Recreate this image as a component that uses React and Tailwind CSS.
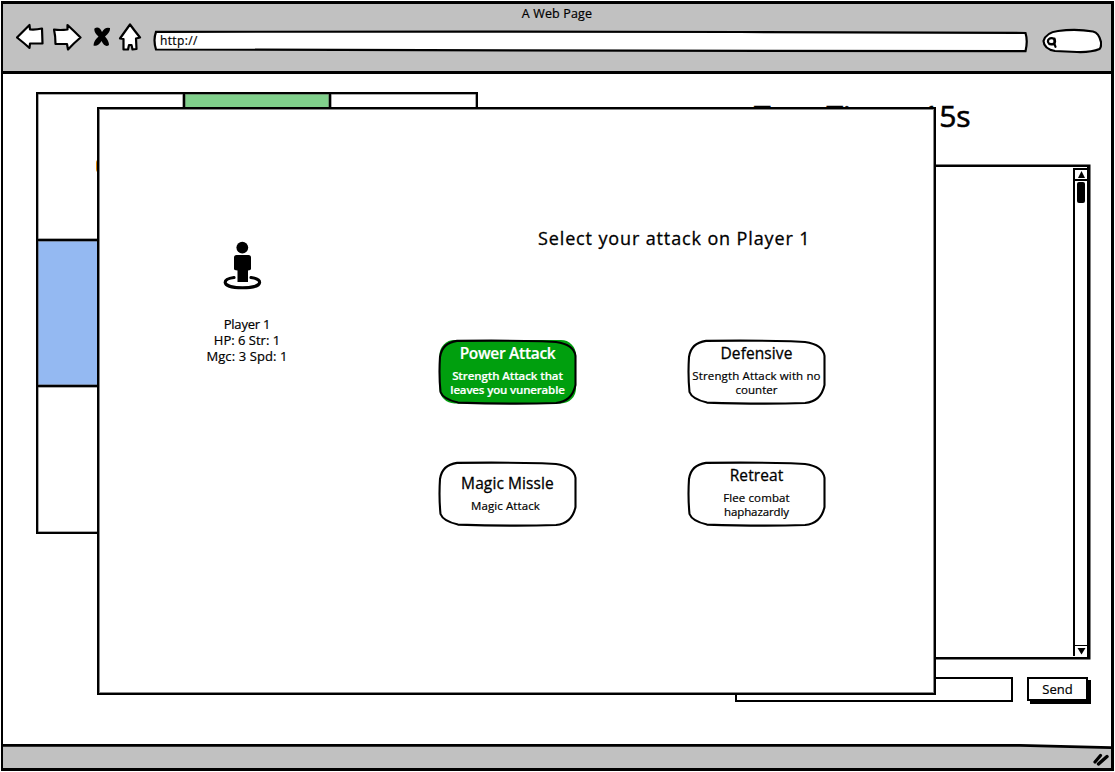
import React from "react";

const ink = { stroke: "#000", strokeWidth: 2.2, strokeLinejoin: "round", strokeLinecap: "round" };

function BackIcon() {
  return (
    <svg className="block h-7 w-7" viewBox="16 23 28 28" fill="#fff" {...ink}>
      <path d="M17 37.5 L29.5 25 L30 29.5 Q36 30 42 28.5 L42.5 43.5 L30 43.5 L29.5 48 Q24 43 17 37.5Z" />
    </svg>
  );
}

function ForwardIcon() {
  return (
    <svg className="block h-7 w-[29px]" viewBox="53 23 29 28" fill="#fff" {...ink}>
      <path d="M54 29.5 Q60 30.5 67.5 29.5 L67.5 25 Q74 31 80.5 37.5 Q74 43 68 49.5 L67 44 L55.5 44 Q55.5 36 54 29.5Z" />
    </svg>
  );
}

function StopIcon() {
  return (
    <svg className="block h-5 w-[18px]" viewBox="93 26 18 20" fill="#000">
      <path d="M94.5 27.5 Q99 24.5 102 31 Q105 25.5 110 27 Q110.5 31 105 35.5 Q109 40 109 44 Q105 47 101.5 40 Q98 46 93.5 44.5 Q93.5 40 98.5 35.5 Q93.5 31 94.5 27.5Z" />
    </svg>
  );
}

function HomeIcon() {
  return (
    <svg className="block h-7 w-6" viewBox="118 23 24 28" fill="#fff" {...ink}>
      <path d="M130 24.5 Q134 30 140 37.5 L136 38.5 L136.5 49 L132.5 49.5 L131.5 45 L129 45 L128 49.5 L123.5 49.5 L123.5 39 L120 38.5 Q126 30 130 24.5Z" />
    </svg>
  );
}

function AddressBar() {
  return (
    <div className="relative flex h-5 w-[874px] items-center pl-[7px] text-[12px] leading-none tracking-[0.35px]">
      <svg className="absolute inset-0 h-full w-full overflow-visible" viewBox="153 31 874 20" fill="#fff" stroke="#000" strokeWidth="2.2">
        <path d="M156 31.8 L480 31.6 L740 32 L1025.5 33 Q1028 41 1025.5 51.2 L640 50.6 L156 49.5 Q153 40 156 31.8Z" />
      </svg>
      <span className="relative">http://</span>
    </div>
  );
}

function SearchBox() {
  return (
    <svg className="block h-[26px] w-[60px]" viewBox="1042 28 60 26" fill="#fff" {...ink}>
      <path d="M1058 31 Q1076 28.5 1093 31.5 Q1099 33 1101 42 Q1101.5 47 1099.5 49 Q1091 52.5 1077 52 L1055 51 Q1044 49 1043.5 41 Q1046 32.5 1058 31Z" />
      <ellipse cx="1051.5" cy="41.2" rx="3.6" ry="3" />
      <path d="M1054.5 38.5 L1054.5 44 L1055.5 46.8 M1054 44.5 L1049.5 44.2" fill="none" />
    </svg>
  );
}

function PlayerIcon() {
  return (
    <svg className="block h-[50px] w-10" viewBox="223 240 40 50">
      <circle cx="242.3" cy="247.6" r="5.9" />
      <path d="M236.5 255 H248.5 Q251 255 251 257.5 V269 Q251 270 248 270.5 V282 H237.5 V270.5 Q234 270 234 269 V257.5 Q234 255 236.5 255Z" />
      <path d="M234 277.5 C227 278.5 225 280.5 225.2 282.5 C226 289.5 259 289.5 259.6 282.5 C259.8 280.5 257.5 278.5 251 277.5" fill="none" stroke="#000" strokeWidth="3.1" strokeLinecap="round" />
    </svg>
  );
}

function AttackCard({ title, lines, selected, titleTrack, lineTracks, single }) {
  return (
    <div className={`relative h-[65px] w-[139px] text-center ${selected ? "text-white" : "text-black"}`}>
      <svg className="absolute inset-0 h-full w-full overflow-visible" viewBox="0 0 139 65">
        {selected && <rect x="1.5" y="1" width="136.5" height="63.5" rx="15" fill="#009f0e" />}
        <path
          d="M19 1.9 Q60 1.2 104 2.2 L118 3 Q136 5.5 137.5 17 L137.5 46 Q134 62.5 118 64 Q75 65.5 20 63.6 Q5 60 2.5 53 Q0.8 36 2 18 Q4 4 19 1.9Z"
          fill={selected ? "none" : "#fff"}
          stroke="#000"
          strokeWidth="2.1"
        />
      </svg>
      <div className={`relative flex flex-col items-center whitespace-nowrap ${single ? "pt-3" : "pt-1"}`}>
        <div className={`text-[15.5px] leading-5 ${selected ? "font-semibold" : "[-webkit-text-stroke:0.3px_#000]"} ${titleTrack}`}>{title}</div>
        <div className={`mt-[6px] text-[11.5px] leading-[14px] ${selected ? "font-semibold" : "[-webkit-text-stroke:0.2px_#000]"} ${single ? "mr-1" : ""}`}>
          {lines.map((line, i) => (
            <div key={line} className={lineTracks[i]}>{line}</div>
          ))}
        </div>
      </div>
    </div>
  );
}

function Board() {
  const fills = ["", "bg-[#80d08b]", "", "bg-[#94b9f2]", "", "", "", "", ""];
  return (
    <div className="grid h-[442px] w-[442px] grid-cols-3 grid-rows-3 gap-[2px] border-2 border-black bg-black">
      {fills.map((fill, i) => (
        <div key={i} className={`flex items-center justify-center shadow-[inset_0_0_0_0.5px_#555] ${fill || "bg-white"}`}>
          {i === 0 && <span className="h-[14px] w-7 rounded-sm bg-[#d98200]" />}
        </div>
      ))}
    </div>
  );
}

function ChatPanel() {
  return (
    <div className="flex w-[355px] flex-col">
      <div className="h-[71px] w-full whitespace-nowrap pl-[19px] pt-[2px] text-[30px] leading-[40px] tracking-[-0.15px] [-webkit-text-stroke:0.6px_#000]">Turn Timer: 15s</div>
      <div className="flex h-[494px] justify-end border-y-2 border-l-2 border-r-[3px] border-black bg-white py-px shadow-[0_0_0_0.5px_#000]">
        <div className="flex w-[14px] flex-col items-center border-l-2 border-t-2 border-black">
          <svg className="h-[9px] w-[9px] shrink-0" viewBox="0 0 9 9"><path d="M4.5 1 L8 8 H1Z" /></svg>
          <div className="h-[2px] w-full bg-black" />
          <div className="mt-px h-[21px] w-[8px] rounded-[2px] bg-black" />
          <div className="mt-auto h-px w-full bg-black" />
          <svg className="h-[10px] w-[9px] shrink-0" viewBox="0 0 9 10"><path d="M0.5 2 H8.5 L4.5 8.5Z" /></svg>
        </div>
      </div>
      <div className="mt-[18px] flex h-[25px] justify-between">
        <div className="w-[278px] border-2 border-black bg-white" />
        <div className="mr-[2px] flex h-6 w-[61px] items-center justify-center border-2 border-black bg-white text-[13px] leading-none shadow-[3px_3px_0_#000]">Send</div>
      </div>
    </div>
  );
}

function AttackDialog() {
  return (
    <div className="absolute left-[97px] top-[107px] flex h-[588px] w-[839px] border-2 border-black bg-white pt-[118px] shadow-[inset_0_0_0_1px_#888]">
      <div className="ml-[99px] flex w-[98px] flex-col items-center pt-[13px]">
        <div className="mr-2"><PlayerIcon /></div>
        <div className="mt-[26px] whitespace-nowrap text-center text-[13px] leading-4">
          <div className="tracking-[-0.2px]">Player 1</div>
          <div>HP: 6 Str: 1</div>
          <div className="tracking-[0.1px]">Mgc: 3 Spd: 1</div>
        </div>
      </div>
      <div className="ml-[142px] w-[388px]">
        <h1 className="-mt-px ml-[100px] whitespace-nowrap text-[18px] leading-6 tracking-[0.87px] [-webkit-text-stroke:0.3px_#000]">Select your attack on Player 1</h1>
        <div className="mt-[89px] grid grid-cols-[139px_139px] gap-x-[110px] gap-y-[57px]">
          <AttackCard title="Power Attack" selected titleTrack="tracking-[-0.3px]" lines={["Strength Attack that", "leaves you vunerable"]} lineTracks={["tracking-[-0.1px]", "tracking-[-0.15px]"]} />
          <AttackCard title="Defensive" titleTrack="tracking-[0.1px]" lines={["Strength Attack with no", "counter"]} lineTracks={["tracking-[0.13px]", "tracking-normal"]} />
          <AttackCard title="Magic Missle" single titleTrack="tracking-[0.1px]" lines={["Magic Attack"]} lineTracks={["tracking-[0.1px]"]} />
          <AttackCard title="Retreat" titleTrack="tracking-[0.1px]" lines={["Flee combat", "haphazardly"]} lineTracks={["tracking-[0.1px]", "tracking-[-0.1px]"]} />
        </div>
      </div>
    </div>
  );
}

export default function App() {
  return (
    <div className="relative h-[772px] w-[1115px] overflow-hidden bg-white p-px font-['Open_Sans','Noto_Sans',sans-serif] text-black [-webkit-text-stroke:0.2px]">
      <div className="flex h-[770px] w-[1113px] flex-col border-y-[3px] border-l-2 border-r-[3px] border-black">
        <header className="h-[70px] shrink-0 border-b-[3px] border-black bg-[#c1c1c1]">
          <div className="pt-px text-center text-[12.5px] leading-[17px] tracking-[0.15px]">A Web Page</div>
          <div className="flex h-[30px] items-center pl-[13px]">
            <BackIcon />
            <div className="ml-[9px]"><ForwardIcon /></div>
            <div className="ml-[11px]"><StopIcon /></div>
            <div className="ml-[7px]"><HomeIcon /></div>
            <div className="ml-[11px] mt-[7px]"><AddressBar /></div>
            <div className="ml-[15px] mt-[8px]"><SearchBox /></div>
          </div>
        </header>
        <main className="flex flex-1 items-start pl-[33px] pt-[18px]">
          <Board />
          <div className="ml-[257px] mt-[2px]"><ChatPanel /></div>
        </main>
        <footer className="flex h-6 shrink-0 items-start justify-end bg-[#c1c1c1]">
          <svg className="h-full w-full" viewBox="4 743 1107 24" preserveAspectRatio="none">
            <path d="M4 741 H1111 V747 L1020 744 H4Z" fill="#fff" />
            <path d="M4 744.4 L700 744.4 L1020 744.4 L1111 746.6" fill="none" stroke="#000" strokeWidth="2.8" />
            <path d="M1095 761 L1100.5 754.5" fill="none" stroke="#000" strokeWidth="3.2" strokeLinecap="round" />
            <path d="M1098.5 763 L1107 755.5" fill="none" stroke="#000" strokeWidth="3.4" strokeLinecap="round" />
          </svg>
        </footer>
      </div>
      <AttackDialog />
    </div>
  );
}
